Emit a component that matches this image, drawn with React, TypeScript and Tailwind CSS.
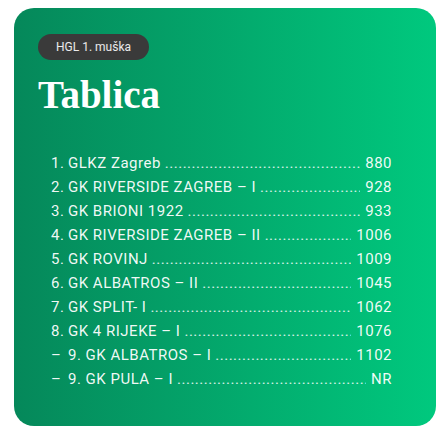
import React from 'react'

const rows = [
    { mark: '1.', name: 'GLKZ Zagreb', score: '880' },
    { mark: '2.', name: 'GK RIVERSIDE ZAGREB – I', score: '928' },
    { mark: '3.', name: 'GK BRIONI 1922', score: '933' },
    { mark: '4.', name: 'GK RIVERSIDE ZAGREB – II', score: '1006' },
    { mark: '5.', name: 'GK ROVINJ', score: '1009' },
    { mark: '6.', name: 'GK ALBATROS – II', score: '1045' },
    { mark: '7.', name: 'GK SPLIT- I', score: '1062' },
    { mark: '8.', name: 'GK 4 RIJEKE – I', score: '1076' },
    { mark: '–', name: '9. GK ALBATROS – I', score: '1102' },
    { mark: '–', name: '9. GK PULA – I', score: 'NR' },
]

const DOTS = '.'.repeat(120)

const App = () => {
    return (
        <div className="w-[443px] h-[431px] bg-white pl-[14px] pt-2">
            <div className="w-[422px] h-[418px] rounded-[20px] bg-linear-to-r from-[#05885a] to-[#00c97e] pl-6 pt-[25px]">
                <span className="inline-flex items-center h-[26px] px-[18px] rounded-full bg-[#3a3a3a] text-[12px] text-white/90 font-['Roboto',sans-serif]">
                    HGL 1. muška
                </span>
                <h1 className="mt-[13px] text-[39px] leading-[44px] font-bold text-white font-['Liberation_Serif',serif]">
                    Tablica
                </h1>
                <ol className="mt-[34px] ml-[13px] w-[341px] font-['Roboto',sans-serif] text-[15px] tracking-[0.5px] leading-[24px] text-white/95">
                    {rows.map((r, i) => (
                        <li key={i} className="flex whitespace-nowrap">
                            <span className="w-[17px] shrink-0">{r.mark}</span>
                            <span className="shrink-0">{r.name}</span>
                            <span className="flex-1 overflow-hidden ml-1 mr-[5px] text-white/85">{DOTS}</span>
                            <span className="shrink-0">{r.score}</span>
                        </li>
                    ))}
                </ol>
            </div>
        </div>
    )
}

export default App
